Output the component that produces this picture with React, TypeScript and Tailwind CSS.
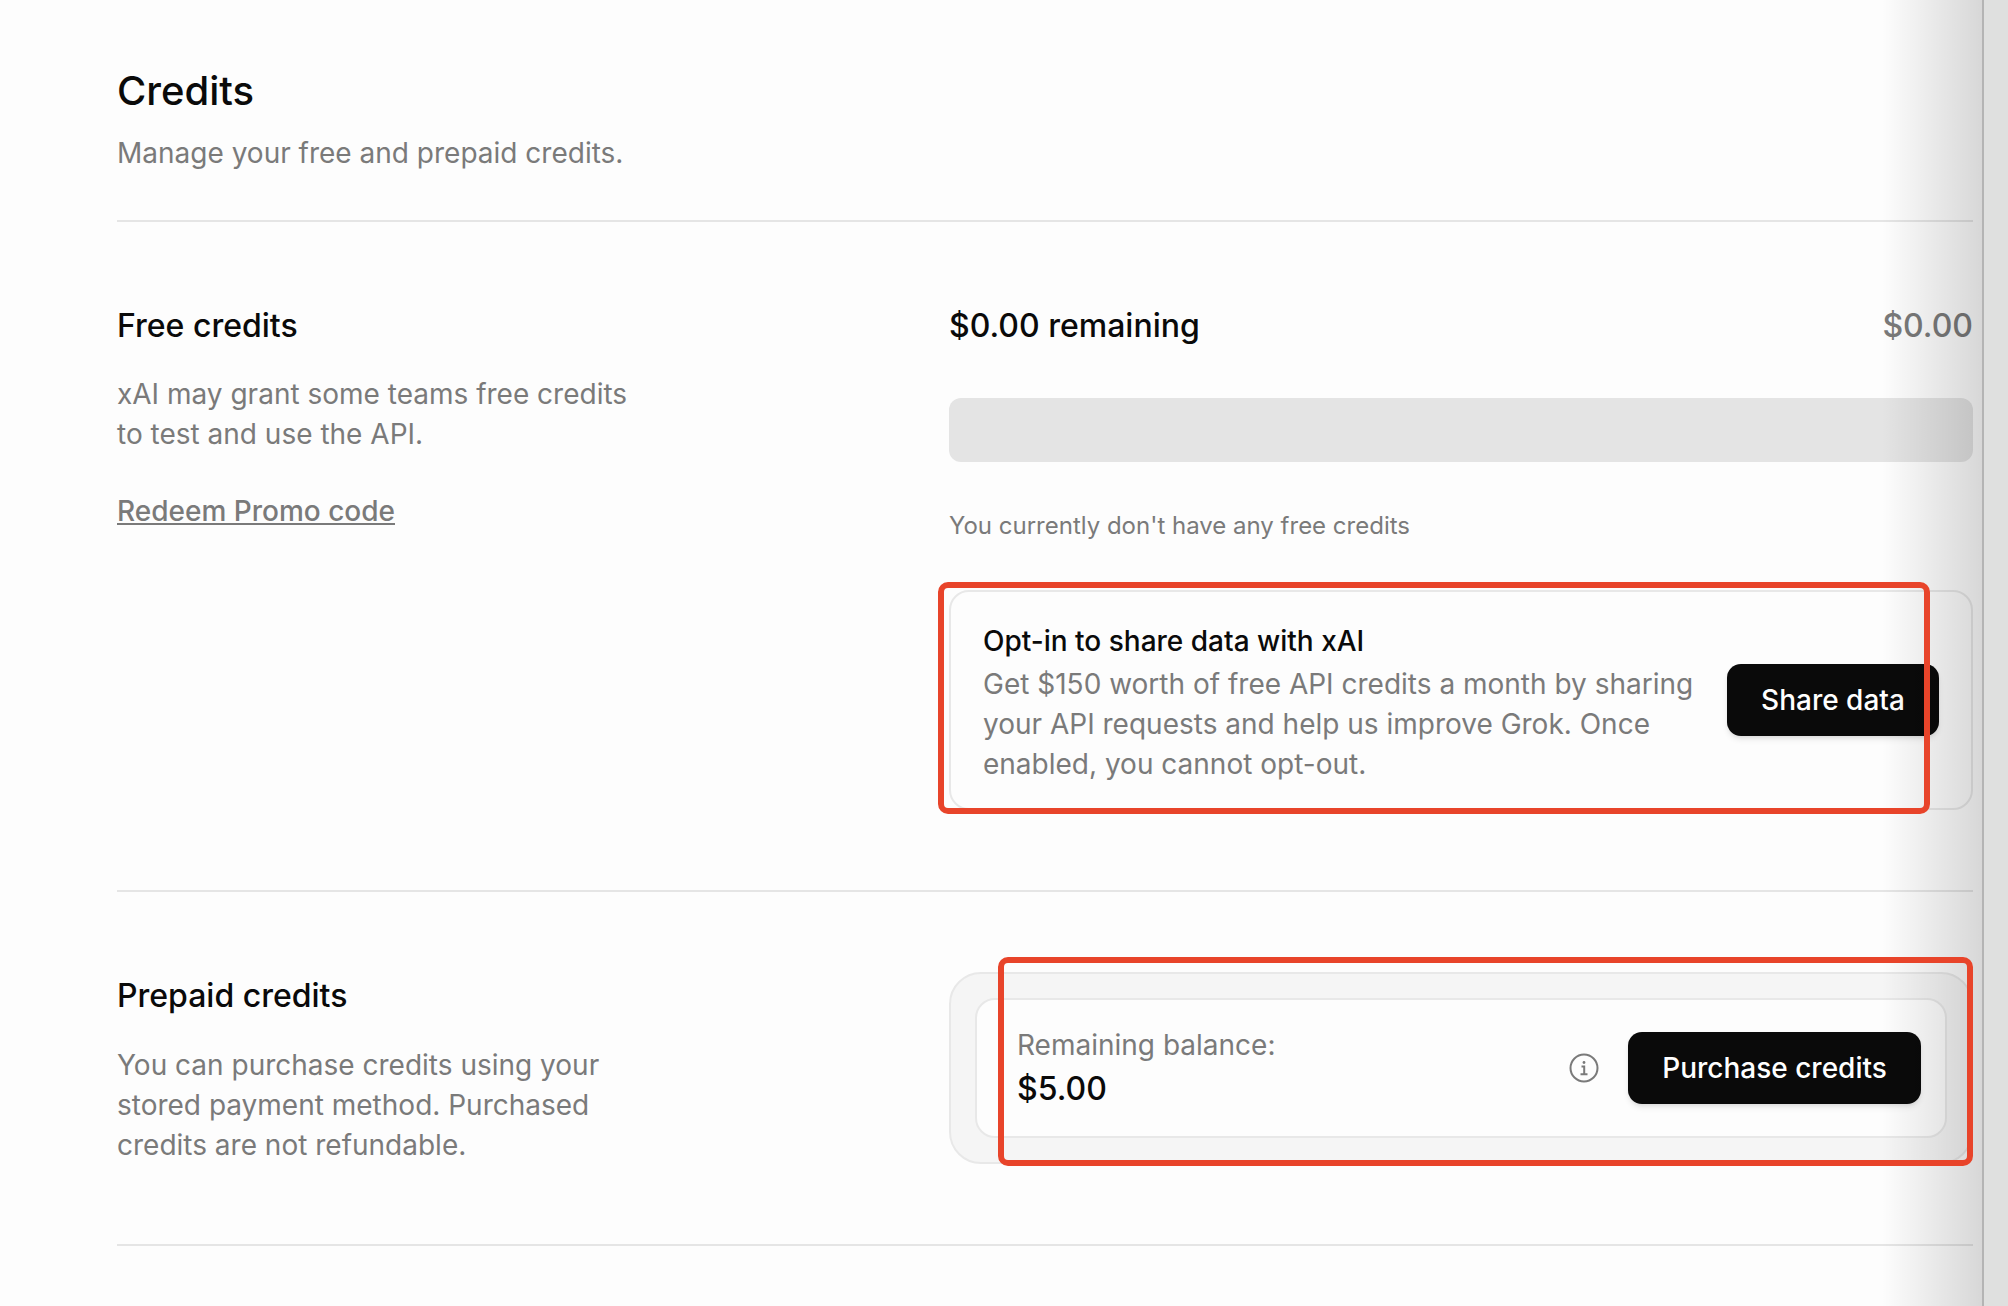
function CreditButton({ label, className }: { label: string; className: string }) {
    return (
        <button className={`h-[72px] shrink-0 rounded-[14px] bg-[#0a0a0a] text-[28px] font-medium text-white shadow-md ${className}`}>
            {label}
        </button>
    );
}

export default function App() {
    return (
        <div className="relative flex h-[1306px] overflow-hidden bg-[#fdfdfd] font-['Inter',sans-serif] text-[#0a0a0a] antialiased">
            <main className="flex-1 pl-[117px] pr-[9px]">
                {/* Header */}
                <div className="pt-[67px]">
                    <h1 className="text-[40px] font-medium leading-[48px]">Credits</h1>
                    <p className="mt-[18px] text-[28px] leading-[40px] text-[#7a7a7a]">Manage your free and prepaid credits.</p>
                </div>
                <div className="mt-[47px] h-[2px] bg-[#e5e5e5]" />

                {/* Free credits */}
                <section className="grid grid-cols-[832px_1fr] pt-[84px]">
                    <div>
                        <h2 className="text-[32px] font-medium leading-[40px]">Free credits</h2>
                        <p className="mt-[28px] w-[540px] text-[28px] leading-[40px] text-[#7a7a7a]">
                            xAI may grant some teams free credits to test and use the API.
                        </p>
                        <a className="mt-[37px] block text-[28px] font-medium leading-[40px] text-[#7a7a7a] underline">Redeem Promo code</a>
                    </div>
                    <div>
                        <div className="flex items-center justify-between">
                            <span className="text-[32px] font-medium leading-[40px]">$0.00 remaining</span>
                            <span className="text-[32px] font-medium leading-[40px] text-[#7a7a7a]">$0.00</span>
                        </div>
                        <div className="mt-[52px] h-[64px] rounded-[12px] bg-[#e4e4e4]" />
                        <p className="mt-[48px] text-[24px] leading-[32px] text-[#7a7a7a]">You currently don't have any free credits</p>
                        <div className="mt-[48px] flex h-[220px] items-center gap-[24px] rounded-[20px] border-2 border-[#e8e8e8] px-[32px]">
                            <div className="flex-1 pt-[4px]">
                                <h3 className="text-[28px] font-medium leading-[40px]">Opt-in to share data with xAI</h3>
                                <p className="mt-[3px] text-[28px] leading-[40px] text-[#7a7a7a]">
                                    Get $150 worth of free API credits a month by sharing your API requests and help us improve Grok. Once enabled, you cannot opt-out.
                                </p>
                            </div>
                            <CreditButton label="Share data" className="mb-[1px] w-[212px]" />
                        </div>
                    </div>
                </section>
                <div className="mt-[80px] h-[2px] bg-[#e5e5e5]" />

                {/* Prepaid credits */}
                <section className="grid grid-cols-[832px_1fr] pt-[84px]">
                    <div>
                        <h2 className="text-[32px] font-medium leading-[40px]">Prepaid credits</h2>
                        <p className="mt-[29px] w-[540px] text-[28px] leading-[40px] text-[#7a7a7a]">
                            You can purchase credits using your stored payment method. Purchased credits are not refundable.
                        </p>
                    </div>
                    <div className="-mt-[4px] h-[192px] rounded-[32px] border-2 border-[#e8e8e8] bg-[#f5f5f5] p-[24px]">
                        <div className="flex h-[140px] items-center rounded-[20px] border-2 border-[#e8e8e8] bg-[#fdfdfd] pl-[40px] pr-[24px]">
                            <div className="mb-[3px] flex-1">
                                <p className="text-[28px] leading-[40px] text-[#7a7a7a]">Remaining balance:</p>
                                <p className="mt-[4px] text-[32px] font-medium leading-[40px]">$5.00</p>
                            </div>
                            <svg viewBox="0 0 30 30" fill="none" stroke="#7a7a7a" strokeWidth="2" className="mr-[29px] h-[30px] w-[30px]">
                                <circle cx="15" cy="15" r="13.5" />
                                <circle cx="15" cy="9.5" r="1.4" fill="#7a7a7a" stroke="none" />
                                <path d="M12.5 13.5H15.2V21M11.5 21.2H18.5" />
                            </svg>
                            <CreditButton label="Purchase credits" className="w-[293px]" />
                        </div>
                    </div>
                </section>
                <div className="mt-[79px] h-[2px] bg-[#e5e5e5]" />
            </main>

            {/* Edge of the next window with its shadow */}
            <aside className="w-[26px] shrink-0 border-l-2 border-[#b4b4b4] bg-[#dfe0df]" />
            <div className="pointer-events-none absolute inset-y-0 right-[26px] w-[100px] bg-gradient-to-r from-transparent to-black/15" />

            {/* Red annotation frames */}
            <div className="pointer-events-none absolute left-[938px] top-[582px] h-[232px] w-[992px] rounded-[10px] border-[6px] border-[#e8442a]" />
            <div className="pointer-events-none absolute left-[998px] top-[957px] h-[209px] w-[975px] rounded-[10px] border-[6px] border-[#e8442a]" />
        </div>
    );
}
